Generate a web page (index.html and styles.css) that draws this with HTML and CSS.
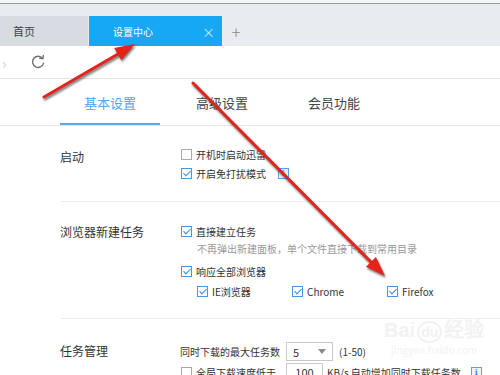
FILE: index.html
```html
<!DOCTYPE html>
<html lang="zh-CN">
<head>
  <meta charset="UTF-8" />
  <title>设置中心</title>
  <link rel="stylesheet" href="styles.css">
</head>
<body>
  <div class="window">
    <div class="tabbar">
      <div class="tab">首页</div>
      <div class="tab active">设置中心<span class="tab-close">×</span></div>
      <div class="tab-add">+</div>
    </div>
    <div class="toolbar">
      <span class="nav-fwd">›</span>
      <svg class="refresh" viewBox="0 0 14 14" width="14" height="14">
        <path d="M11.6 3.4 A5.6 5.6 0 1 0 12.6 8.2" fill="none" stroke="#6f6f6f" stroke-width="1.4" stroke-linecap="round"/>
        <path d="M8.8 3.2 L11.9 3.6 L12.3 0.6" fill="none" stroke="#6f6f6f" stroke-width="1.4" stroke-linecap="round" stroke-linejoin="round"/>
      </svg>
    </div>

    <div class="settings">
      <div class="settings-nav">
        <div class="nav-item active">基本设置</div>
        <div class="nav-item">高级设置</div>
        <div class="nav-item">会员功能</div>
      </div>

      <div class="section section-start">
        <div class="section-label">启动</div>
        <div class="options">
          <label class="check"><span class="box"></span>开机时启动迅雷</label>
          <label class="check"><span class="box checked"></span>开启免打扰模式<span class="info info-wide">i</span></label>
        </div>
      </div>

      <div class="section section-browser">
        <div class="section-label label-browser">浏览器新建任务</div>
        <div class="options">
          <label class="check"><span class="box checked"></span>直接建立任务</label>
          <div class="hint">不再弹出新建面板，单个文件直接下载到常用目录</div>
          <label class="check check-all"><span class="box checked"></span>响应全部浏览器</label>
          <div class="browsers">
            <label class="check"><span class="box checked"></span>IE浏览器</label>
            <label class="check"><span class="box checked"></span>Chrome</label>
            <label class="check"><span class="box checked"></span>Firefox</label>
          </div>
        </div>
      </div>

      <div class="section section-task">
        <div class="section-label label-task">任务管理</div>
        <div class="options">
          <div class="field-row">
            <span>同时下载的最大任务数</span>
            <div class="select">5<span class="caret"></span></div>
            <span>(1-50)</span>
          </div>
          <div class="field-row">
            <label class="check"><span class="box"></span>全局下载速度低于</label>
            <div class="number">100</div>
            <span>KB/s 自动增加同时下载任务数</span>
            <span class="info">i</span>
          </div>
        </div>
      </div>
    </div>

    <div class="watermark">
      <div class="wm-logo">Bai<span class="wm-paw">du</span>经验</div>
      <div class="wm-url">jingyan.baidu.com</div>
    </div>

    <svg class="arrows" viewBox="0 0 500 375" width="500" height="375">
      <g class="arrow">
        <line x1="44" y1="97" x2="118" y2="54" stroke="#e5231b" stroke-width="3" stroke-linecap="round"/>
        <polygon points="135,44 121.2,60.1 114.2,48" fill="#e5231b"/>
      </g>
      <g class="arrow">
        <line x1="193" y1="83" x2="371" y2="262" stroke="#e5231b" stroke-width="3" stroke-linecap="round"/>
        <polygon points="385,276 365.9,266.7 375.9,256.9" fill="#e5231b"/>
      </g>
    </svg>
  </div>
</body>
</html>
```

FILE: styles.css
```css
* {
  margin: 0;
  padding: 0;
  box-sizing: border-box;
}
body {
  width: 500px;
  height: 375px;
  overflow: hidden;
  background: #fff;
  font-family: "Noto Sans CJK SC", "Microsoft YaHei", sans-serif;
  color: #333;
}
.window {
  position: relative;
  width: 500px;
  height: 375px;
  overflow: hidden;
  padding-top: 3px;
  background: #f6f6f6;
}

/* browser tabs */
.tabbar {
  height: 43px;
  border-top: 1px solid #9b9b9b;
  background: #e8ecf0;
  display: flex;
  align-items: flex-end;
}
.tab {
  height: 30px;
  width: 88px;
  padding-left: 13px;
  display: flex;
  align-items: center;
  background: #d6dce2;
  color: #444;
  font-size: 11px;
}
.tab.active {
  width: 133px;
  margin-left: 1px;
  padding-left: 24px;
  background: #16a7f5;
  color: #fff;
  font-size: 10px;
}
.tab-close {
  margin-left: auto;
  margin-right: 7px;
  font-size: 13px;
  color: #cfeafd;
}
.tab-add {
  height: 30px;
  width: 28px;
  display: flex;
  align-items: center;
  justify-content: center;
  color: #8a8a8a;
  font-size: 17px;
  font-weight: 300;
}

.toolbar {
  height: 33px;
  background: #fff;
  border-bottom: 1px solid #e4e4e4;
  display: flex;
  align-items: center;
}
.nav-fwd {
  width: 8px;
  padding-left: 2px;
  color: #cfcfcf;
  font-size: 15px;
}
.refresh {
  margin-left: 23px;
}

/* settings page */
.settings {
  background: #fff;
  height: 330px;
}
.settings-nav {
  height: 47px;
  padding-left: 60px;
  display: flex;
  gap: 12px;
  border-bottom: 1px solid #e6e6e6;
}
.nav-item {
  width: 100px;
  display: flex;
  align-items: center;
  justify-content: center;
  font-size: 13px;
  color: #444;
}
.nav-item.active {
  color: #4ea6ef;
  box-shadow: inset 0 -2px 0 #56a8ef;
}

.section {
  margin-left: 60px;
  display: flex;
  border-bottom: 1px solid #eeeeee;
}
.section-start {
  padding: 19px 0;
}
.section-browser {
  padding: 20px 0 18px;
}
.section-task {
  padding-top: 23px;
  border-bottom: none;
}
.section-label {
  width: 120px;
  flex-shrink: 0;
  padding-top: 3px;
  font-size: 12px;
  line-height: 18px;
  color: #333;
}
.label-browser {
  padding-top: 1px;
}
.label-task {
  padding-top: 0;
}
.options {
  display: flex;
  flex-direction: column;
  gap: 1px;
  font-size: 10px;
}
.section-browser .options {
  gap: 0;
}
.check {
  height: 18px;
  display: flex;
  align-items: center;
  gap: 4px;
  padding-left: 1px;
  white-space: nowrap;
}
.box {
  position: relative;
  width: 11px;
  height: 11px;
  flex-shrink: 0;
  border: 1px solid #a9a9a9;
  background: #fff;
}
.box.checked {
  border-color: #4b95e3;
}
.box.checked::after {
  content: '';
  position: absolute;
  left: 3px;
  top: 0;
  width: 3px;
  height: 6px;
  border: solid #3a8be2;
  border-width: 0 1.5px 1.5px 0;
  transform: rotate(45deg);
}
.hint {
  height: 18px;
  line-height: 18px;
  padding-left: 17px;
  color: #999;
}
.check-all {
  margin-top: 4px;
}
.browsers {
  margin-top: 2px;
  padding-left: 17px;
  display: flex;
}
.browsers .check {
  width: 95px;
  padding-left: 0;
}
.info {
  width: 11px;
  height: 11px;
  margin-left: 4px;
  border: 1px solid #5ba2e8;
  background: #eaf4fd;
  color: #3a8be2;
  font-family: "DejaVu Serif", serif;
  font-size: 8px;
  font-weight: bold;
  line-height: 9px;
  text-align: center;
}
.info-wide {
  margin-left: 8px;
}

.field-row {
  height: 19px;
  display: flex;
  align-items: center;
  gap: 6px;
  white-space: nowrap;
}
.field-row + .field-row {
  margin-top: 1px;
}
.select {
  width: 47px;
  height: 19px;
  padding-left: 6px;
  border: 1px solid #c9c9c9;
  display: flex;
  align-items: center;
  font-size: 11px;
}
.caret {
  margin-left: auto;
  margin-right: 6px;
  border-left: 4px solid transparent;
  border-right: 4px solid transparent;
  border-top: 5px solid #8a8a8a;
}
.field-row .check {
  width: 100px;
  gap: 4px;
}
.number {
  width: 37px;
  height: 19px;
  border: 1px solid #c9c9c9;
  text-align: center;
  line-height: 17px;
  font-size: 11px;
  margin-right: -2px;
}

/* faint watermark */
.watermark {
  position: absolute;
  left: 384px;
  top: 316px;
  color: #f2f2f2;
  text-align: center;
}
.wm-logo {
  font-size: 20px;
  font-weight: bold;
  line-height: 28px;
  font-family: "Liberation Sans", sans-serif;
}
.wm-paw {
  display: inline-block;
  font-size: 14px;
  border: 2px solid #f2f2f2;
  border-radius: 50%;
  padding: 0 2px;
  margin: 0 2px;
  line-height: 18px;
}
.wm-url {
  font-size: 10px;
  line-height: 12px;
}

.arrows {
  position: absolute;
  left: 0;
  top: 0;
  pointer-events: none;
}
.arrow {
  filter: drop-shadow(1px 2px 1px rgba(0, 0, 0, 0.55));
}
```
